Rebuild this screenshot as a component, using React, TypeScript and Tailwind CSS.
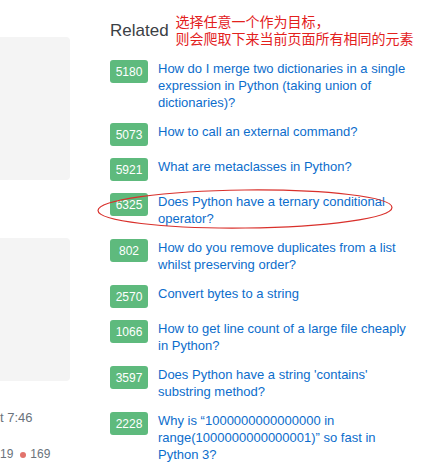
import React from 'react';

const related = [
    { score: 5180, title: 'How do I merge two dictionaries in a single expression in Python (taking union of dictionaries)?' },
    { score: 5073, title: 'How to call an external command?' },
    { score: 5921, title: 'What are metaclasses in Python?' },
    { score: 6325, title: 'Does Python have a ternary conditional operator?', marked: true },
    { score: 802, title: 'How do you remove duplicates from a list whilst preserving order?' },
    { score: 2570, title: 'Convert bytes to a string' },
    { score: 1066, title: 'How to get line count of a large file cheaply in Python?' },
    { score: 3597, title: "Does Python have a string 'contains' substring method?" },
    { score: 2228, title: 'Why is \u201c1000000000000000 in range(1000000000000001)\u201d so fast in Python 3?' },
];

const App = () => {
    return (
        <div className="flex w-[440px] h-[475px] overflow-hidden bg-white font-['Liberation_Sans',Arial,sans-serif]">
            {/* cut-off question column */}
            <div className="w-[70px] shrink-0 flex flex-col pt-[37px]">
                <div className="h-[143px] bg-[#f4f4f4] rounded-r-[4px]" />
                <div className="h-[143px] bg-[#f4f4f4] rounded-r-[4px] mt-[58px]" />
                <p className="mt-[28px] text-[13px] leading-[17px] text-[#6a737c] whitespace-nowrap">t 7:46</p>
                <div className="mt-[21px] flex items-center text-[12px] leading-[15px] whitespace-nowrap">
                    <span className="text-[#6a737c]">19</span>
                    <span className="ml-[7px] w-[6px] h-[6px] rounded-full bg-[#e2736c]" />
                    <span className="ml-[4px] text-[#6a737c]">169</span>
                </div>
            </div>

            {/* sidebar */}
            <div className="ml-[40px] pt-[13px] flex flex-col">
                <div className="flex items-start">
                    <h3 className="mt-[8px] text-[17px] leading-[20px] text-[#3b4045]">Related</h3>
                    <p className="ml-[7px] text-[14px] leading-[17px] text-[#e3211d] font-['Noto_Sans_CJK_SC',sans-serif]">
                        选择任意一个作为目标，<br />则会爬取下来当前页面所有相同的元素
                    </p>
                </div>

                <div className="mt-[13px] flex flex-col gap-[12px]">
                    {related.map((item) => (
                        <div key={item.score} className="relative flex items-start">
                            <div className="w-[38px] h-[23px] shrink-0 rounded-[3px] bg-[#5eba7d] text-white text-[12px] flex items-center justify-center">
                                {item.score}
                            </div>
                            <a className="ml-[10px] w-[255px] text-[13px] leading-[17px] text-[#0c6dcc]">{item.title}</a>
                            {item.marked && (
                                <svg className="absolute left-[-14px] top-[-5px] pointer-events-none" width="300" height="44" viewBox="0 0 300 44">
                                    <ellipse cx="149" cy="21" rx="147" ry="19" fill="none" stroke="#d9302b" strokeWidth="1.2" transform="rotate(-0.6 149 21)" />
                                </svg>
                            )}
                        </div>
                    ))}
                </div>
            </div>
        </div>
    );
};

export default App;
